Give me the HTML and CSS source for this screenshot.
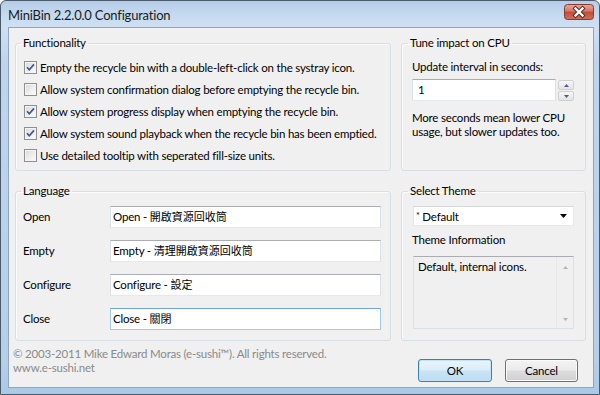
FILE: index.html
```html
<!DOCTYPE html>
<html lang="en">
<head>
<meta charset="utf-8">
<title>MiniBin 2.2.0.0 Configuration</title>
<link rel="stylesheet" href="styles.css">
</head>
<body>
<div class="window">
  <div class="titlebar">
    <span class="title">MiniBin 2.2.0.0 Configuration</span>
    <span class="close">
      <svg width="30" height="16" viewBox="0 0 30 16">
        <defs>
          <linearGradient id="cg" x1="0" y1="0" x2="0" y2="1">
            <stop offset="0" stop-color="#e8a89c"/>
            <stop offset="0.45" stop-color="#d47666"/>
            <stop offset="0.5" stop-color="#c14a36"/>
            <stop offset="1" stop-color="#d2705b"/>
          </linearGradient>
        </defs>
        <rect x="0.5" y="0.5" width="29" height="15" rx="3" fill="url(#cg)" stroke="#8b3a2e"/>
        <path d="M11.5 4.5 L18.5 11.5 M18.5 4.5 L11.5 11.5" stroke="#5b2219" stroke-width="4.2" stroke-linecap="square"/>
        <path d="M11.5 4.5 L18.5 11.5 M18.5 4.5 L11.5 11.5" stroke="#ffffff" stroke-width="2.4" stroke-linecap="square"/>
      </svg>
    </span>
  </div>
  <div class="client">
    <div class="groups">
      <fieldset class="group func">
        <legend>Functionality</legend>
        <div class="check"><span class="cb"><svg width="11" height="11" viewBox="0 0 11 11"><path d="M2 5.2 L4.3 7.8 L9 2.4" fill="none" stroke="#3e5796" stroke-width="1.7"/></svg></span>Empty the recycle bin with a double-left-click on the systray icon.</div>
        <div class="check"><span class="cb"></span>Allow system confirmation dialog before emptying the recycle bin.</div>
        <div class="check"><span class="cb"><svg width="11" height="11" viewBox="0 0 11 11"><path d="M2 5.2 L4.3 7.8 L9 2.4" fill="none" stroke="#3e5796" stroke-width="1.7"/></svg></span>Allow system progress display when emptying the recycle bin.</div>
        <div class="check"><span class="cb"><svg width="11" height="11" viewBox="0 0 11 11"><path d="M2 5.2 L4.3 7.8 L9 2.4" fill="none" stroke="#3e5796" stroke-width="1.7"/></svg></span>Allow system sound playback when the recycle bin has been emptied.</div>
        <div class="check"><span class="cb"></span>Use detailed tooltip with seperated fill-size units.</div>
      </fieldset>
      <fieldset class="group side cpu">
        <legend>Tune impact on CPU</legend>
        <div class="inner">
          <div class="line">Update interval in seconds:</div>
          <div class="spin">
            <div class="textbox spinbox">1</div>
            <div class="spinbtns">
              <span class="sbtn"><svg width="5" height="3" viewBox="0 0 5 3"><path d="M0 3 L2.5 0 L5 3Z" fill="#4c5d86"/></svg></span>
              <span class="sbtn"><svg width="5" height="3" viewBox="0 0 5 3"><path d="M0 0 L2.5 3 L5 0Z" fill="#4c5d86"/></svg></span>
            </div>
          </div>
          <p class="note">More seconds mean lower CPU<br>usage, but slower updates too.</p>
        </div>
      </fieldset>
      <fieldset class="group lang">
        <legend>Language</legend>
        <div class="langgrid">
          <span class="lbl">Open</span><div class="textbox">Open - <span class="cjk">開啟資源回收筒</span></div>
          <span class="lbl">Empty</span><div class="textbox">Empty - <span class="cjk">清理開啟資源回收筒</span></div>
          <span class="lbl">Configure</span><div class="textbox">Configure - <span class="cjk">設定</span></div>
          <span class="lbl">Close</span><div class="textbox focus">Close - <span class="cjk">關閉</span></div>
        </div>
      </fieldset>
      <fieldset class="group side theme">
        <legend>Select Theme</legend>
        <div class="inner">
          <div class="combo"><span><span class="ast">*</span> Default</span><svg width="7" height="4" viewBox="0 0 7 4"><path d="M0 0 H7 L3.5 4Z" fill="#000"/></svg></div>
          <div class="line info">Theme Information</div>
          <div class="memo">
            <span class="memotext">Default, internal icons.</span>
            <span class="scroll">
              <svg width="5" height="3" viewBox="0 0 5 3"><path d="M0 3 L2.5 0 L5 3Z" fill="#b4b4b4"/></svg>
              <svg width="5" height="3" viewBox="0 0 5 3"><path d="M0 0 L2.5 3 L5 0Z" fill="#b4b4b4"/></svg>
            </span>
          </div>
        </div>
      </fieldset>
    </div>
    <div class="footer">
      <div class="copy">
        <div>© 2003-2011 Mike Edward Moras (e-sushi™). All rights reserved.</div>
        <div>www.e-sushi.net</div>
      </div>
      <div class="buttons">
        <span class="btn default">OK</span>
        <span class="btn">Cancel</span>
      </div>
    </div>
  </div>
</div>
</body>
</html>
```

FILE: styles.css
```css
* { box-sizing: border-box; }
html, body { margin: 0; padding: 0; }
body {
  width: 600px;
  height: 395px;
  overflow: hidden;
  font-family: Lato, "Noto Sans CJK TC", sans-serif;
  font-size: 11.5px;
  letter-spacing: -0.2px;
  color: #000;
  background: #ffffff;
}
.window {
  width: 600px;
  height: 395px;
  border: 1px solid #4b5a6b;
  border-radius: 6px 6px 0 0;
  background: linear-gradient(to bottom, #b4cde8 0px, #c6daef 14px, #cfe0f2 26px, #bfd5ec 60px, #b6cfe9 360px, #a9c8e8 395px);
  padding: 0 5px 6px 7px;
  display: flex;
  flex-direction: column;
}
.titlebar {
  height: 26px;
  display: flex;
  justify-content: space-between;
  align-items: flex-start;
}
.title {
  font-size: 13px;
  line-height: 16px;
  margin-top: 6px;
  color: #1a1a1a;
  letter-spacing: -0.2px;
}
.close {
  margin-top: 3px;
  width: 30px;
  height: 16px;
  display: block;
}
.close svg { display: block; }
.client {
  flex: 1;
  background: #f0f0f0;
  border: 1px solid #8fa6bf;
  padding: 8px 6px 0 6px;
  display: flex;
  flex-direction: column;
}
.groups {
  display: grid;
  grid-template-columns: 376px 185px;
  grid-template-rows: 135px 157px;
  column-gap: 10px;
  row-gap: 13px;
}
.group {
  margin: 0;
  min-width: 0;
  border: 1px solid #d5dfe5;
  border-radius: 3px;
  padding: 0;
  box-shadow: 1px 1px 0 #fbfbfb inset;
}
.group legend {
  padding: 0 2px;
  line-height: 14px;
  height: 14px;
}
.func { padding: 6px 0 0 5px; }
.lang { padding: 8px 0 0 5px; }
.side { padding: 0 0 0 6px; }
.cpu { padding-top: 10px; }
.theme { padding-top: 8px; }

.check {
  height: 22px;
  display: flex;
  align-items: center;
  margin-left: 3px;
  white-space: nowrap;
}
.cb {
  width: 13px;
  height: 13px;
  border: 1px solid #8e8f8f;
  background: linear-gradient(135deg, #d8d8d8 0%, #f0f0f0 60%, #fdfdfd 100%);
  box-shadow: inset 0 0 0 1px #f4f4f4;
  margin-right: 3px;
  display: flex;
  align-items: center;
  justify-content: center;
  flex: none;
}
.cb svg { display: block; }

.inner { padding-left: 4px; }
.line { line-height: 14px; }
.spin {
  display: flex;
  align-items: flex-start;
  margin-top: 5px;
  gap: 2px;
}
.textbox {
  height: 22px;
  background: #fff;
  border: 1px solid #e2e3ea;
  border-top-color: #abadb3;
  border-left-color: #dbdfe6;
  border-right-color: #dbdfe6;
  border-bottom-color: #e3e9ef;
  padding: 0 2px;
  line-height: 20px;
  white-space: nowrap;
}
.textbox.focus {
  border-color: #a4c9e8;
  border-top-color: #6fa6d6;
}
.cjk {
  font-size: 11px;
  letter-spacing: 0;
  color: #000;
}
.spinbox { width: 144px; padding-left: 5px; }
.spinbtns {
  display: flex;
  flex-direction: column;
  gap: 1px;
  margin-top: 1px;
}
.sbtn {
  width: 16px;
  height: 10px;
  border: 1px solid #d0d0d0;
  border-radius: 2px;
  background: linear-gradient(#f6f6f6, #e4e4e4);
  display: flex;
  align-items: center;
  justify-content: center;
}
.sbtn svg { display: block; }
.note {
  margin: 10px 0 0 0;
  line-height: 14px;
}

.langgrid {
  display: grid;
  grid-template-columns: 87px 271px;
  grid-auto-rows: 22px;
  row-gap: 12px;
  padding-left: 2px;
  align-items: center;
}
.lbl { line-height: 14px; }

.combo {
  width: 161px;
  height: 20px;
  background: #fff;
  border: 1px solid #e4e7eb;
  border-top-color: #d5d8dc;
  display: flex;
  align-items: center;
  justify-content: space-between;
  padding: 0 6px 0 2px;
  margin-left: 1px;
}
.combo svg { display: block; }
.ast { font-size: 9px; vertical-align: 2px; }
.info { margin-top: 7px; }
.memo {
  margin-top: 9px;
  margin-left: 1px;
  width: 161px;
  height: 73px;
  border: 1px solid #dcdfe4;
  border-top-color: #abadb3;
  background: #f0f0f0;
  display: flex;
  justify-content: space-between;
}
.memotext { padding: 3px 0 0 4px; line-height: 14px; }
.scroll {
  width: 17px;
  border-left: 1px solid #e8e8e8;
  display: flex;
  flex-direction: column;
  justify-content: space-between;
  align-items: center;
  padding: 9px 0 7px 0;
}
.scroll svg { display: block; }

.footer {
  margin-top: 6px;
  display: flex;
  justify-content: space-between;
  align-items: flex-start;
}
.copy {
  margin-left: -2px;
  color: #8a8a8a;
  line-height: 14px;
}
.buttons {
  display: flex;
  gap: 13px;
  margin-top: 12px;
  margin-right: 9px;
}
.btn {
  width: 73px;
  height: 23px;
  border: 1px solid #707070;
  border-radius: 3px;
  background: linear-gradient(#f3f3f3 0%, #ebebeb 48%, #dddddd 52%, #cfcfcf 100%);
  box-shadow: inset 0 0 0 1px #fbfbfb;
  display: flex;
  align-items: center;
  justify-content: center;
  line-height: 14px;
}
.btn.default {
  width: 74px;
  border-color: #3c7fb1;
  background: linear-gradient(#eaf5fc 0%, #dcedf9 48%, #c9e4f6 52%, #bcdcf2 100%);
  box-shadow: inset 0 0 0 1px #c2e2f7;
}
```
